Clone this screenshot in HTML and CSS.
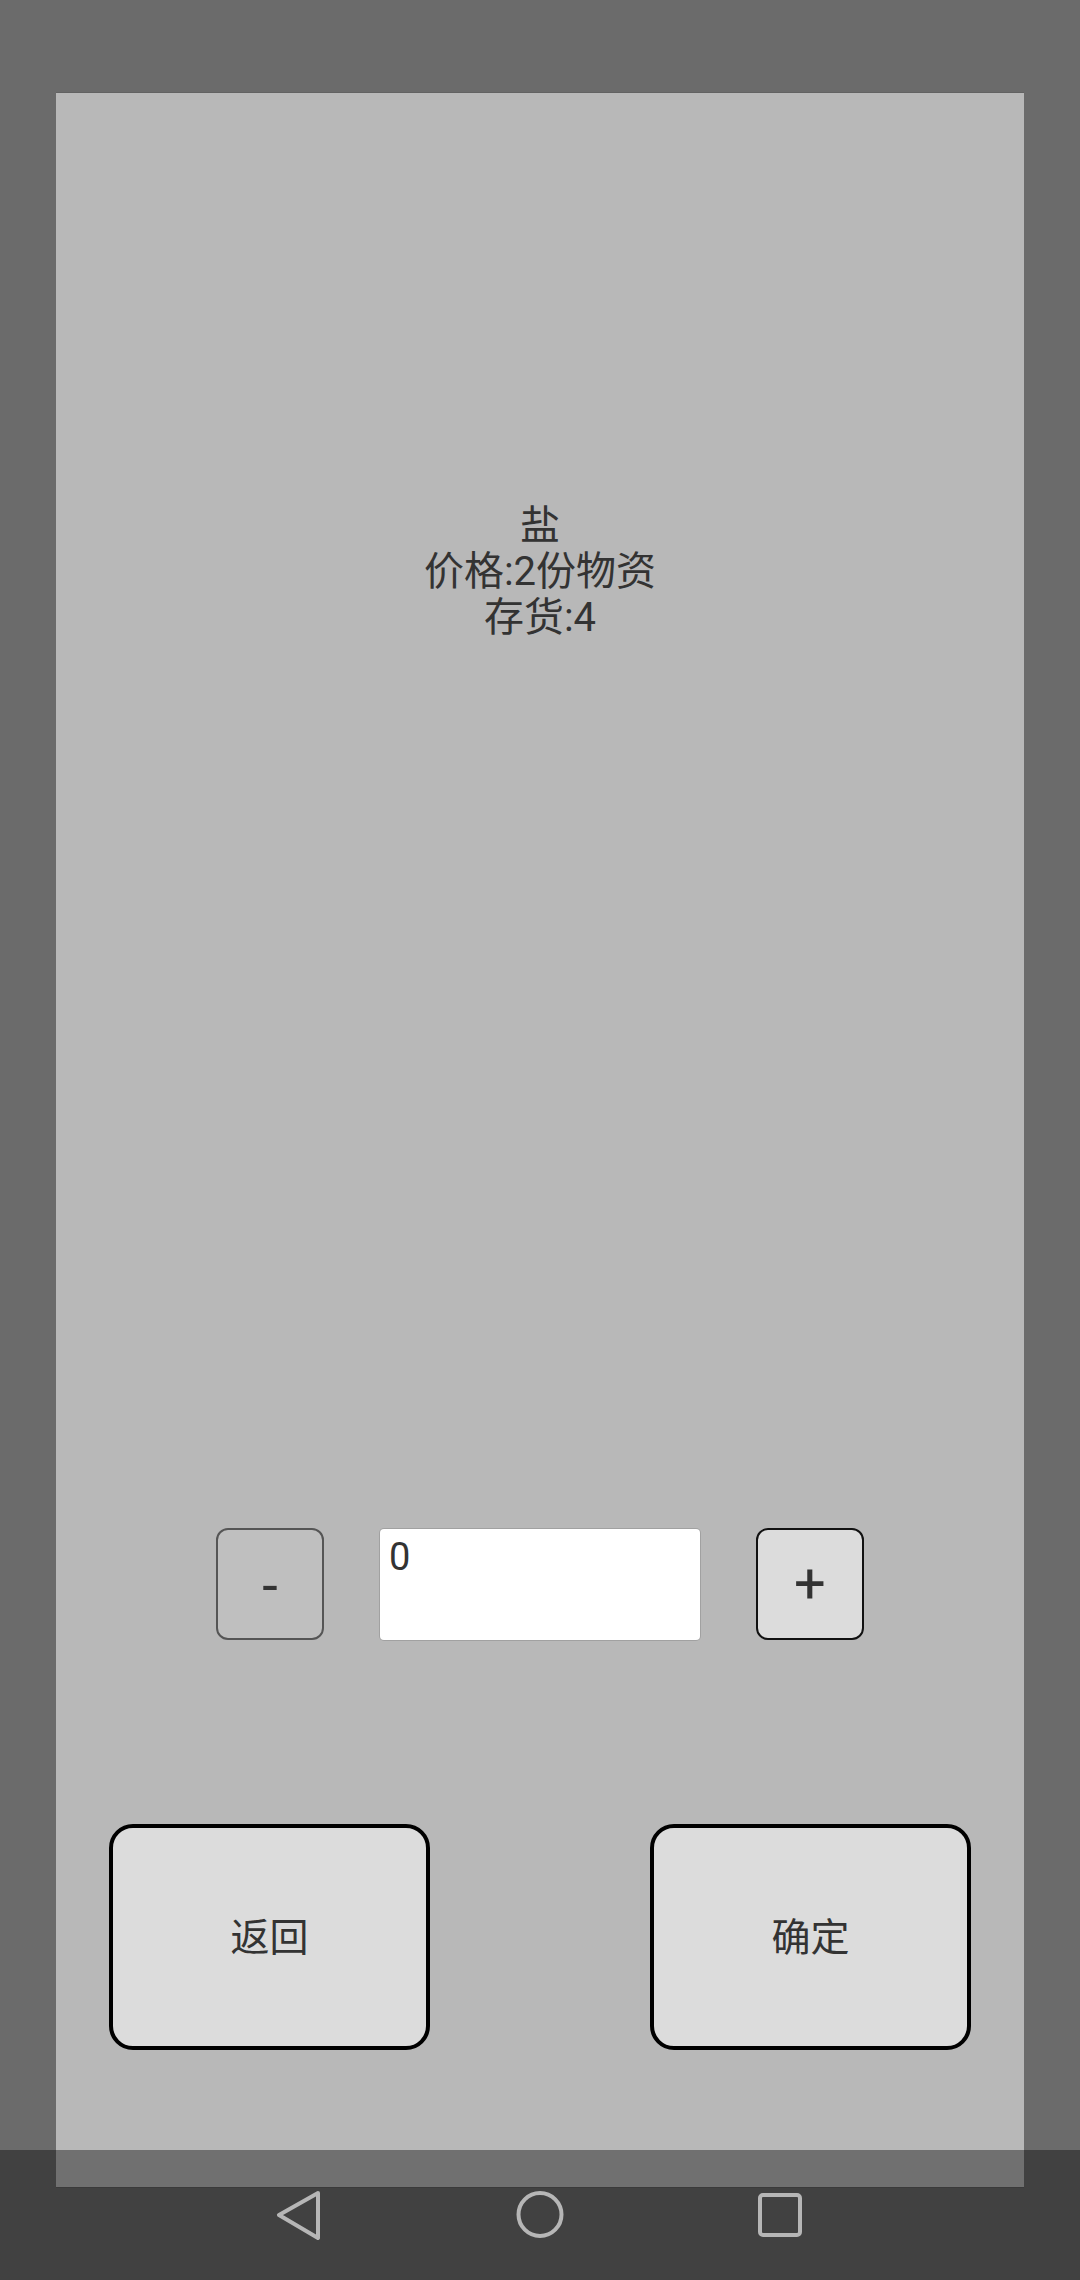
FILE: index.html
```html
<!DOCTYPE html>
<html lang="zh-CN">
<head>
<meta charset="utf-8">
<title>商店</title>
<link rel="stylesheet" href="styles.css">
</head>
<body>
<div class="screen">
  <div class="panel">
    <div class="info">
      <div>盐</div>
      <div>价格:2份物资</div>
      <div>存货:4</div>
    </div>
    <div class="controls">
      <div class="step minus">-</div>
      <div class="field">0</div>
      <div class="step plus">+</div>
    </div>
    <div class="actions">
      <div class="action">返回</div>
      <div class="action">确定</div>
    </div>
  </div>
</div>
<div class="navbar">
  <svg class="navicon" viewBox="0 0 50 50" width="50" height="50"><polygon points="43,3 4,25 43,48" fill="none" stroke="#b6b6b6" stroke-width="4" stroke-linejoin="round"/></svg>
  <svg class="navicon" viewBox="0 0 50 50" width="50" height="50"><circle cx="25" cy="24.5" r="21.5" fill="none" stroke="#b6b6b6" stroke-width="4"/></svg>
  <svg class="navicon" viewBox="0 0 50 50" width="50" height="50"><rect x="5" y="5" width="40" height="40" rx="3" fill="none" stroke="#b6b6b6" stroke-width="4"/></svg>
</div>
</body>
</html>
```
FILE: styles.css
```css
html, body {
  margin: 0;
  padding: 0;
}
body {
  width: 1080px;
  height: 2280px;
  overflow: hidden;
  background: #6b6b6b;
  font-family: Roboto, "Noto Sans CJK SC", sans-serif;
  color: #333333;
  position: relative;
}
.screen {
  padding-top: 93px;
  padding-left: 56px;
}
.panel {
  width: 968px;
  height: 2094px;
  background: #b8b8b8;
  display: flex;
  flex-direction: column;
  box-shadow: 0 -1px 0 rgba(0,0,0,0.08), 0 1px 0 rgba(0,0,0,0.1);
}
.info {
  margin-top: 410px;
  font-size: 40px;
  line-height: 46px;
  text-align: center;
}
.controls {
  margin-top: 887px;
  display: flex;
  justify-content: center;
  gap: 56px;
}
.step {
  width: 108px;
  height: 112px;
  box-sizing: border-box;
  border-radius: 12px;
  display: flex;
  align-items: center;
  justify-content: center;
  font-size: 56px;
  line-height: 1;
}
.minus {
  background: #bfbfbf;
  border: 2px solid #555555;
  padding-top: 4px;
}
.plus {
  background: #dcdcdc;
  border: 2px solid #111111;
}
.field {
  width: 320px;
  height: 111px;
  margin-top: 1px;
  box-sizing: border-box;
  background: #ffffff;
  border-radius: 4px;
  box-shadow: 0 0 0 1px rgba(0,0,0,0.12);
  padding: 5px 9px;
  font-size: 38px;
  line-height: 46px;
}
.actions {
  margin-top: 184px;
  display: flex;
  justify-content: center;
  gap: 220px;
}
.action {
  width: 321px;
  height: 226px;
  box-sizing: border-box;
  background: #dcdcdc;
  border: 4px solid #000000;
  border-radius: 24px;
  display: flex;
  align-items: center;
  justify-content: center;
  padding-bottom: 6px;
  font-size: 39px;
}
.navbar {
  position: absolute;
  left: 0;
  bottom: 0;
  width: 1080px;
  height: 130px;
  background: rgba(0,0,0,0.39);
  display: flex;
  justify-content: center;
  align-items: center;
  gap: 190px;
}
.navicon {
  display: block;
}
```
